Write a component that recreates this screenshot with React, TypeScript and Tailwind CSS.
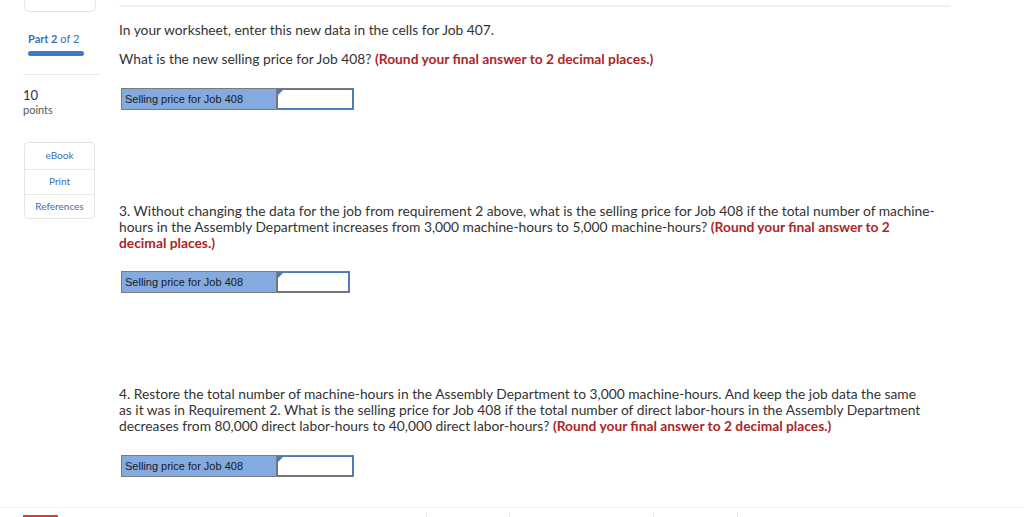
import React from 'react';

const SANS = 'font-["Lato","Open_Sans",sans-serif]';

function AnswerRow({ inputWidth }: { inputWidth: string }) {
  return (
    <div className="flex h-[22px] border border-[#7a7a7a] w-fit">
      <div className='w-[155px] bg-[#84abdf] border-r border-[#7a7a7a] pl-[3px] flex items-center text-[11px] text-[#1a1a1a] font-["Liberation_Sans",Arial,sans-serif]'>
        Selling price for Job 408
      </div>
      <div className={`relative ${inputWidth} bg-white border border-[#4f78b8]`}>
        <span className="absolute left-0 top-0 w-0 h-0 border-t-[5px] border-t-[#4f78b8] border-r-[5px] border-r-transparent" />
      </div>
    </div>
  );
}

function Red({ children }: { children: React.ReactNode }) {
  return <span className="font-bold text-[#ad2626]">{children}</span>;
}

export default function App() {
  return (
    <div className={`relative w-[1024px] h-[517px] overflow-hidden bg-white text-[#333] ${SANS}`}>
      <div className="flex">
        {/* sidebar */}
        <div className="w-[119px] shrink-0 pl-[23px]">
          <div className="w-[72px] h-[12px] border border-t-0 border-[#e4e4e4] rounded-b-md ml-[1px]" />
          <div className="ml-[5px] mt-[19px] text-[11px] text-[#3a6fb5]">
            <span className="font-bold">Part 2</span> of 2
          </div>
          <div className="ml-[5px] mt-[3px] w-[56px] h-[5px] rounded-full bg-[#3d79c9]" />
          <div className="mt-[18px] w-[78px] border-t border-[#ececec]" />
          <div className="mt-[13px] text-[13px] leading-[15px] text-[#1f3550]">10</div>
          <div className="text-[11px] leading-[14px] text-[#555]">points</div>
          <div className="mt-[25px] w-[71px] ml-[1px] border border-[#e4e4e4] rounded-[4px] text-[10px] text-[#3a6fb5] flex flex-col">
            <div className="h-[27px] flex items-center justify-center border-b border-[#e8e8e8]">eBook</div>
            <div className="h-[25px] flex items-center justify-center border-b border-[#e8e8e8]">Print</div>
            <div className="h-[23px] flex items-center justify-center">References</div>
          </div>
        </div>

        {/* main */}
        <div className="flex-1">
          <div className="mt-[5px] w-[831px] border-t-2 border-[#f0f0f0]" />
          <div className="w-[816px] text-[13.8px] leading-[16px]">
            <p className="mt-[15px]">In your worksheet, enter this new data in the cells for Job 407.</p>
            <p className="mt-[13px]">
              What is the new selling price for Job 408? <Red>(Round your final answer to 2 decimal places.)</Red>
            </p>
            <div className="mt-[21px] ml-[2px]">
              <AnswerRow inputWidth="w-[76px]" />
            </div>
            <p className="mt-[93px]">
              3. Without changing the data for the job from requirement 2 above, what is the selling price for Job 408 if the total number of machine-hours in the Assembly Department increases from 3,000 machine-hours to 5,000 machine-hours? <Red>(Round your final answer to 2 decimal places.)</Red>
            </p>
            <div className="mt-[20px] ml-[2px]">
              <AnswerRow inputWidth="w-[72px]" />
            </div>
            <p className="mt-[93px] w-[806px]">
              4. Restore the total number of machine-hours in the Assembly Department to 3,000 machine-hours. And keep the job data the same as it was in Requirement 2. What is the selling price for Job 408 if the total number of direct labor-hours in the Assembly Department decreases from 80,000 direct labor-hours to 40,000 direct labor-hours? <Red>(Round your final answer to 2 decimal places.)</Red>
            </p>
            <div className="mt-[21px] ml-[2px]">
              <AnswerRow inputWidth="w-[76px]" />
            </div>
          </div>
        </div>
      </div>

      {/* bottom bar */}
      <div className="absolute left-0 right-0 top-[507px] h-[10px] border-t border-[#f2f2f2] bg-white">
        <div className="absolute left-[23px] bottom-0 w-[35px] h-[2px] bg-[#d93a3a]" />
        <div className="absolute left-[426px] top-[4px] w-px h-[6px] bg-[#e6e6e6]" />
        <div className="absolute left-[509px] top-[4px] w-px h-[6px] bg-[#e6e6e6]" />
        <div className="absolute left-[653px] top-[4px] w-px h-[6px] bg-[#e6e6e6]" />
        <div className="absolute left-[737px] top-[4px] w-px h-[6px] bg-[#e6e6e6]" />
      </div>
    </div>
  );
}
